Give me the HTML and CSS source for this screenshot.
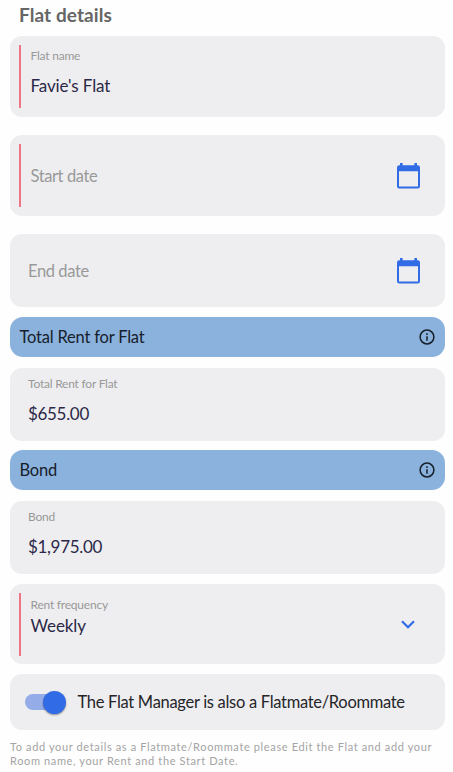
FILE: index.html
```html
<!DOCTYPE html>
<html lang="en">
  <head>
    <meta charset="UTF-8" />
    <meta name="viewport" content="width=device-width, initial-scale=1.0" />
    <title>Flat details</title>
    <link rel="stylesheet" href="styles.css">
  </head>
  <body>
    <form class="flat-form">
      <h2>Flat details</h2>

      <div class="field required name">
        <div class="field-text">
          <span class="label">Flat name</span>
          <span class="value">Favie's Flat</span>
        </div>
      </div>

      <div class="field required date">
        <span class="placeholder">Start date</span>
        <svg class="calendar" viewBox="0 0 23 26">
          <path fill-rule="evenodd" d="M3 0h2.600v2.200h11.800V0H20v2.200h.8A2.200 2.200 0 0 1 23 4.400v18.900a2.200 2.200 0 0 1-2.200 2.200H2.200A2.200 2.200 0 0 1 0 23.300V4.400a2.200 2.200 0 0 1 2.200-2.200H3zM2 8.200v15.300h19V8.200z" />
        </svg>
      </div>

      <div class="field date end">
        <span class="placeholder">End date</span>
        <svg class="calendar" viewBox="0 0 23 26">
          <path fill-rule="evenodd" d="M3 0h2.600v2.200h11.800V0H20v2.200h.8A2.200 2.200 0 0 1 23 4.400v18.900a2.200 2.200 0 0 1-2.200 2.200H2.200A2.200 2.200 0 0 1 0 23.300V4.400a2.200 2.200 0 0 1 2.200-2.200H3zM2 8.200v15.300h19V8.200z" />
        </svg>
      </div>

      <div class="section-bar">
        <span>Total Rent for Flat</span>
        <svg class="info" viewBox="0 0 16 16">
          <circle cx="8" cy="8" r="6.900" />
          <path d="M8 7.200v4.500M8 4.300v1.600" />
        </svg>
      </div>

      <div class="field money">
        <div class="field-text">
          <span class="label">Total Rent for Flat</span>
          <span class="value">$655.00</span>
        </div>
      </div>

      <div class="section-bar">
        <span>Bond</span>
        <svg class="info" viewBox="0 0 16 16">
          <circle cx="8" cy="8" r="6.900" />
          <path d="M8 7.200v4.500M8 4.300v1.600" />
        </svg>
      </div>

      <div class="field money">
        <div class="field-text">
          <span class="label">Bond</span>
          <span class="value">$1,975.00</span>
        </div>
      </div>

      <div class="field required frequency">
        <div class="field-text">
          <span class="label">Rent frequency</span>
          <span class="value">Weekly</span>
        </div>
        <svg class="chevron" viewBox="0 0 14 9">
          <path d="M1 1.200l6 6 6-6" />
        </svg>
      </div>

      <label class="toggle-row">
        <span class="switch"><span class="knob"></span></span>
        <span>The Flat Manager is also a Flatmate/Roommate</span>
      </label>

      <p class="hint">To add your details as a Flatmate/Roommate please Edit the Flat and add your Room name, your Rent and the Start Date.</p>
    </form>
  </body>
</html>
```

FILE: styles.css
```css
* {
  margin: 0;
  padding: 0;
  box-sizing: border-box;
}

body {
  font-family: Lato, sans-serif;
  background-color: #fefefe;
  color: #2b2847;
  overflow: hidden;
}

.flat-form {
  display: flex;
  flex-direction: column;
  padding: 3px 8px 0 10px;
}

h2 {
  height: 33.300px;
  padding-left: 9px;
  font-size: 19px;
  line-height: 24px;
  letter-spacing: 0.080px;
  color: #666;
}

.field {
  display: flex;
  align-items: stretch;
  height: 80.600px;
  margin-bottom: 18.500px;
  padding: 9px 25px 9px 9px;
  background-color: #eeeef0;
  border-radius: 12px;
}

/* red marker on mandatory fields */
.required::before {
  content: "";
  width: 2px;
  height: 63px;
  margin-right: 9.500px;
  background-color: #ed7585;
}

.name {
  padding-top: 8.500px;
}

.field-text {
  display: flex;
  flex: 1;
  flex-direction: column;
}

.label {
  margin-top: 3px;
  font-size: 12px;
  line-height: 16px;
  letter-spacing: -0.220px;
  color: #999;
}

.value {
  margin-top: 11px;
  font-size: 17px;
  line-height: 22px;
  letter-spacing: -0.120px;
}

.date {
  align-items: center;
}

.end {
  height: 72.500px;
  margin-bottom: 9.800px;
  padding-left: 18px;
}

.placeholder {
  flex: 1;
  font-size: 16.500px;
  line-height: 22px;
  letter-spacing: -0.400px;
  color: #999;
}

.calendar {
  width: 23px;
  height: 26px;
  fill: #316be6;
}

.section-bar {
  display: flex;
  align-items: center;
  justify-content: space-between;
  height: 40px;
  margin-bottom: 11px;
  padding: 0 10.500px 0 9.500px;
  background-color: #8ab2dd;
  border-radius: 13px;
  font-size: 16.500px;
  letter-spacing: -0.200px;
  color: #17202b;
}

.info {
  width: 16px;
  height: 16px;
  fill: none;
  stroke: #17202b;
  stroke-width: 1.500;
}

.money {
  height: 73px;
  margin-bottom: 9.500px;
  padding: 5px 18px;
}

.money .value {
  letter-spacing: -0.320px;
}

.frequency {
  margin-bottom: 9.500px;
  padding-right: 30px;
}

.frequency .label {
  margin-top: 4px;
}

.frequency .value {
  margin-top: 2.500px;
  letter-spacing: -0.100px;
}

.chevron {
  align-self: center;
  width: 14px;
  height: 9px;
  margin-top: 1px;
  fill: none;
  stroke: #316be6;
  stroke-width: 2.200;
}

.toggle-row {
  display: flex;
  align-items: center;
  height: 56.500px;
  margin-bottom: 9.500px;
  padding-left: 15px;
  background-color: #eeeef0;
  border-radius: 12px;
  font-size: 16.500px;
  letter-spacing: -0.300px;
  color: #252529;
}

.switch {
  display: flex;
  align-items: center;
  justify-content: flex-end;
  width: 40px;
  height: 16px;
  margin-right: 12.500px;
  background-color: #94ade9;
  border-radius: 8px;
}

.knob {
  width: 23px;
  height: 23px;
  margin-right: -1px;
  background-color: #316be6;
  border-radius: 50%;
  box-shadow: 0 1px 2px rgba(0, 0, 0, 0.4);
}

.hint {
  font-size: 11px;
  line-height: 14px;
  letter-spacing: 0.630px;
  color: #a4a4a4;
}
```
